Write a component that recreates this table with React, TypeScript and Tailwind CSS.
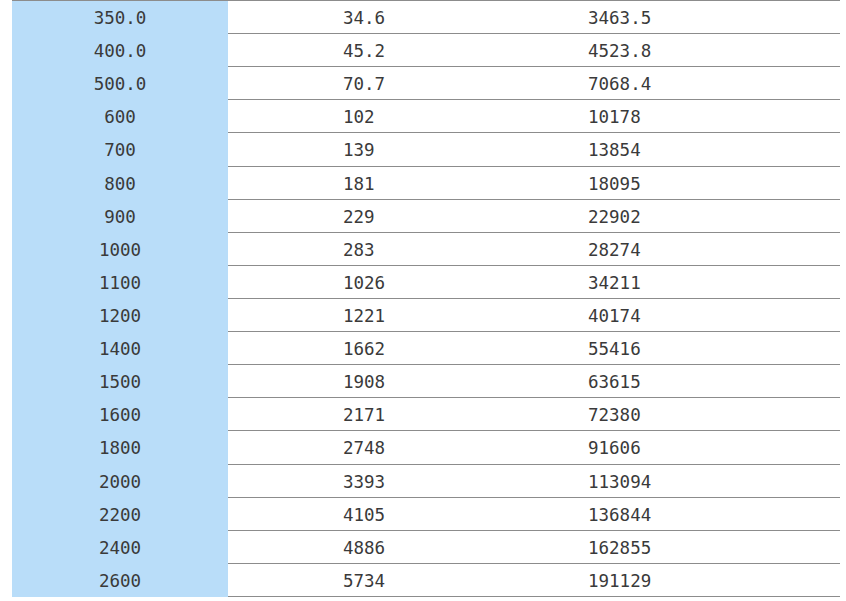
import React from "react";

const rows: [string, string, string][] = [
  ["350.0", "34.6", "3463.5"],
  ["400.0", "45.2", "4523.8"],
  ["500.0", "70.7", "7068.4"],
  ["600", "102", "10178"],
  ["700", "139", "13854"],
  ["800", "181", "18095"],
  ["900", "229", "22902"],
  ["1000", "283", "28274"],
  ["1100", "1026", "34211"],
  ["1200", "1221", "40174"],
  ["1400", "1662", "55416"],
  ["1500", "1908", "63615"],
  ["1600", "2171", "72380"],
  ["1800", "2748", "91606"],
  ["2000", "3393", "113094"],
  ["2200", "4105", "136844"],
  ["2400", "4886", "162855"],
  ["2600", "5734", "191129"],
];

export default function App() {
  return (
    <div className="w-[846px] h-[601px] bg-white overflow-hidden">
      <div
        className="ml-[12px] w-[828px] border-t border-black/45 text-[17.5px] text-[#3a3a3a]"
        style={{ fontFamily: '"DejaVu Sans Mono", monospace' }}
      >
        {rows.map((r, i) => (
          <div
            key={i}
            className="grid grid-cols-[216px_245px_1fr] h-[33.11px] border-b border-black/45"
          >
            <div className="bg-[#b9ddf9] text-center pt-[4px] leading-[27px] -mb-px">
              {r[0]}
            </div>
            <div className="pl-[115px] pt-[4px] leading-[27px]">{r[1]}</div>
            <div className="pl-[115px] pt-[4px] leading-[27px]">{r[2]}</div>
          </div>
        ))}
      </div>
    </div>
  );
}
